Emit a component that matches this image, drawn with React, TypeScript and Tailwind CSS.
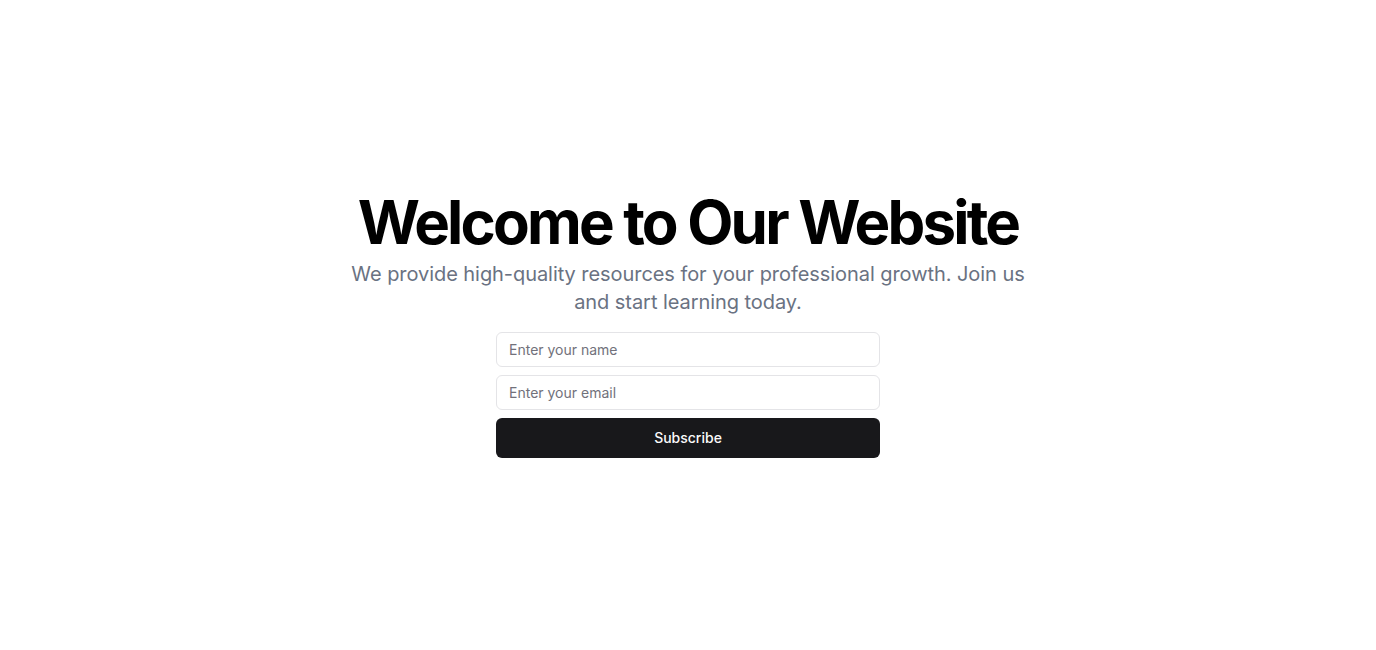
export default function App() {
  return (
    <main
      className="flex min-h-screen w-full items-center justify-center bg-white px-4"
      style={{ fontFamily: "Inter, 'Liberation Sans', sans-serif" }}
    >
      <div className="flex flex-col items-center space-y-4 text-center">
        <div className="flex flex-col items-center space-y-2">
          <h1 className="text-6xl/none font-bold tracking-[-0.047em] text-black">
            Welcome to Our Website
          </h1>
          <p className="max-w-[700px] text-xl/7 tracking-[-0.003em] text-gray-500">
            We provide high-quality resources for your professional growth. Join us and start learning today.
          </p>
        </div>
        <div className="w-full max-w-sm">
          <form className="flex flex-col space-y-2" onSubmit={(e) => e.preventDefault()}>
            <input
              type="text"
              placeholder="Enter your name"
              className="h-[35px] w-full rounded-md border border-zinc-200 bg-white px-3 text-sm text-zinc-900 placeholder:text-zinc-500 focus:outline-none"
            />
            <input
              type="email"
              placeholder="Enter your email"
              className="h-[35px] w-full rounded-md border border-zinc-200 bg-white px-3 text-sm text-zinc-900 placeholder:text-zinc-500 focus:outline-none"
            />
            <button
              type="submit"
              className="h-10 w-full rounded-md bg-zinc-900 text-sm font-medium text-zinc-50"
            >
              Subscribe
            </button>
          </form>
        </div>
      </div>
    </main>
  );
}
